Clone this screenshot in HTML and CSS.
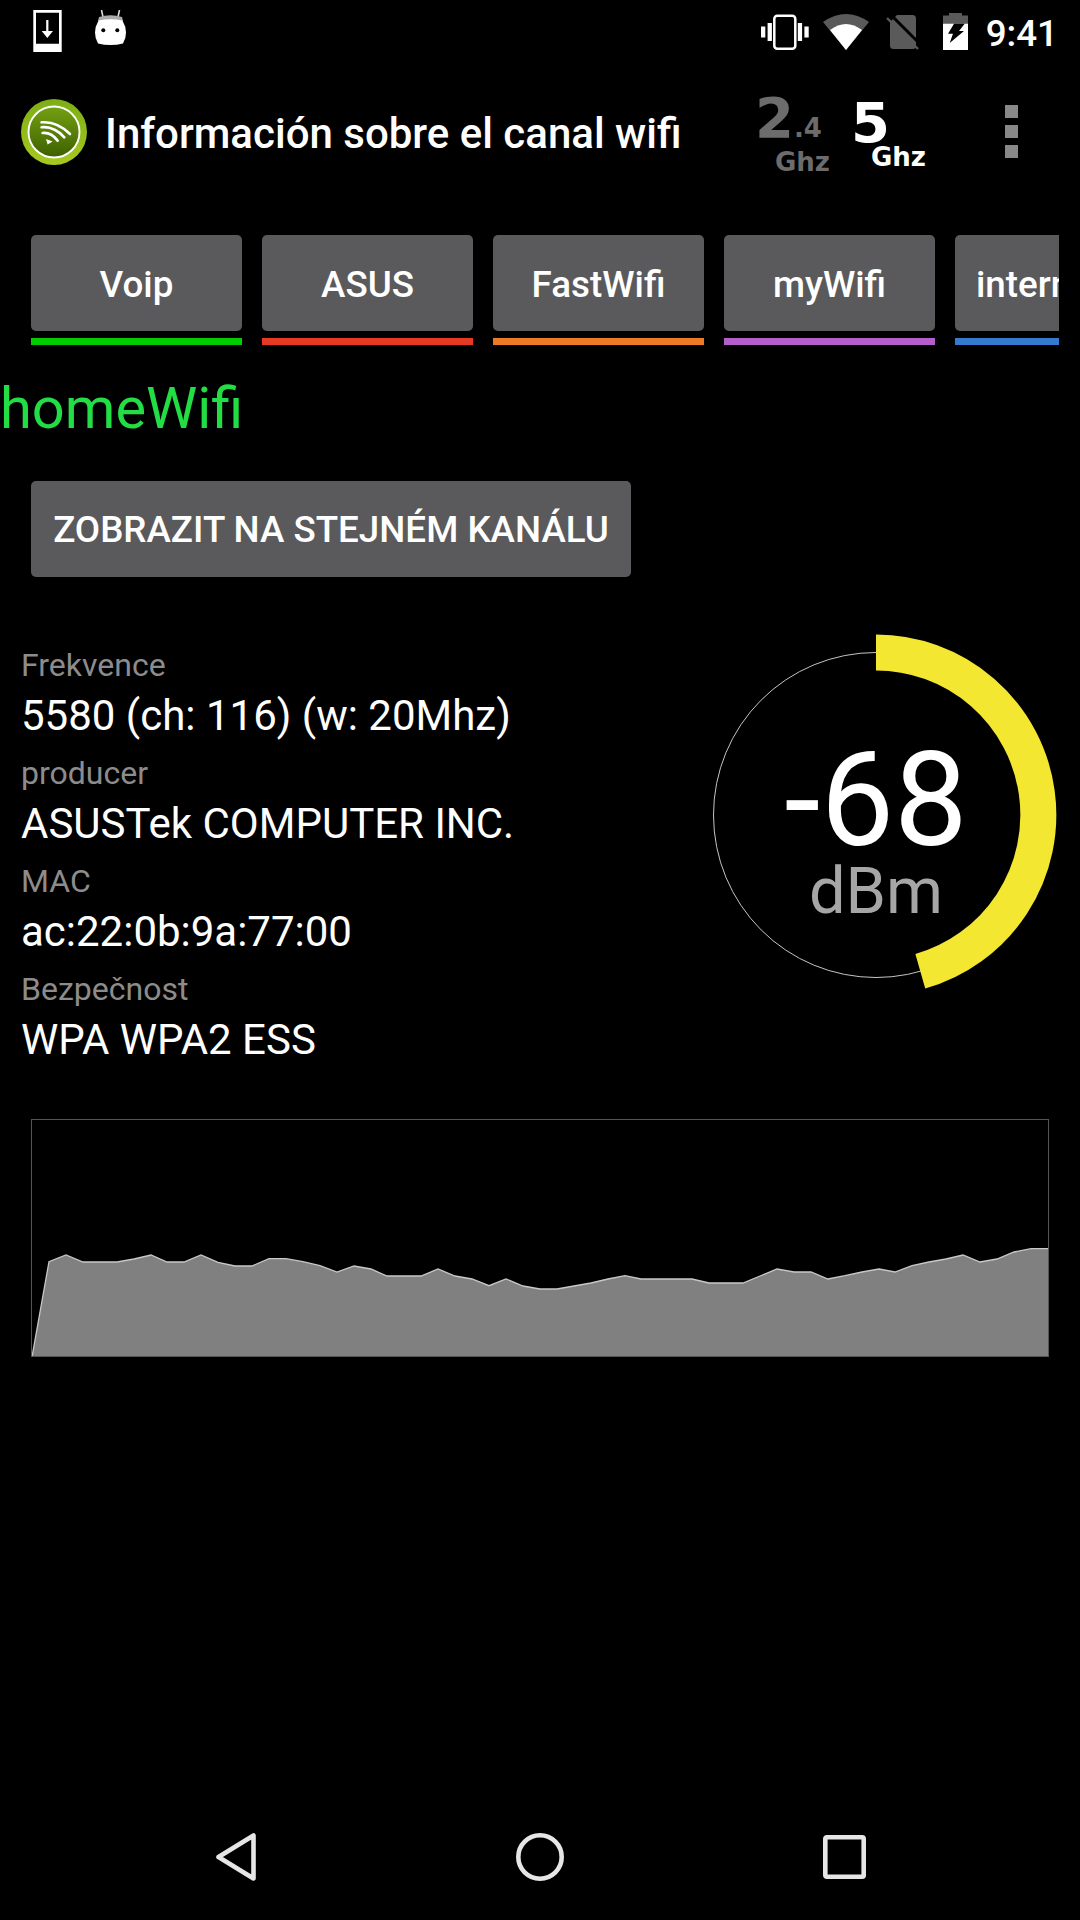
FILE: index.html
```html
<!DOCTYPE html>
<html lang="es">
<head>
	<meta charset="utf-8">
	<meta name="viewport" content="width=device-width, initial-scale=1.0">
	<title>Información sobre el canal wifi</title>
	<link rel="stylesheet" href="styles.css">
</head>
<body>
	<div class="screen">
		<div class="statusbar">
			<div class="status-left">
				<svg width="29" height="42" viewBox="0 0 29 42">
					<path fill="#fff" fill-rule="evenodd" d="M.3 0h28.400v42H.3zM3 2.800v31h23v-31z"/>
					<path fill="none" stroke="#fff" stroke-width="2.200" d="M14.300 10v12"/>
					<path fill="#fff" d="M8.700 21h11.300l-5.700 7z"/>
				</svg>
				<svg width="31" height="36" viewBox="0 0 31 36">
					<path fill="none" stroke="#ddd" stroke-width="1.600" d="M6.500 0l1.500 7M24.500 0l-1.500 7"/>
					<path fill="#aaa" d="M4 7q11.500-3.500 23 0l1 4H3z"/>
					<path fill="#fff" d="M3.500 10.500q12-2.500 24 0 3.500 6 3.500 12 0 6-3 11-12.500 3-25 0-3-5-3-11 0-6 3.500-12z"/>
					<circle cx="8.300" cy="20.300" r="2" fill="#000"/>
					<circle cx="22.300" cy="20.300" r="2" fill="#000"/>
				</svg>
			</div>
			<div class="status-right">
				<svg class="ic-vibrate" width="48" height="36" viewBox="0 0 48 36">
					<rect x="13.300" y="1.700" width="21" height="33" rx="3" fill="none" stroke="#fff" stroke-width="2.500"/>
					<path fill="#fff" d="M6.600 9h4.300v18H6.600zM0 12.500h4.300v11H0zM36.800 9h4.300v18h-4.300zM43.400 12.500h4.300v11h-4.300z"/>
				</svg>
				<svg class="ic-wifi" width="46" height="36" viewBox="0 0 46 36">
					<path fill="#5a5a5a" d="M0 8Q23-8 46 8L23 36z"/>
					<path fill="#fff" d="M7 16Q23 4 39 16L23 36z"/>
				</svg>
				<svg class="ic-nosim" width="33" height="36" viewBox="0 0 33 36">
					<rect x="4" y="1" width="26" height="34" rx="3.500" fill="#5a5a5a"/>
					<path stroke="#000" stroke-width="3" d="M2-2L36 32"/>
					<path fill="#000" d="M0 0h12L0 12z"/>
					<path stroke="#5a5a5a" stroke-width="2.400" d="M1 4l31 31"/>
				</svg>
				<svg class="ic-battery" width="25" height="37" viewBox="0 0 25 37">
					<path fill="#5a5a5a" d="M6 0h13v2.500h6V11H0V2.500h6z"/>
					<path fill="#fff" fill-rule="evenodd" d="M0 10.700h25V37H0zM11 10.700h10.700L16 18h5L6.700 30 10 20.700H5z"/>
				</svg>
				<span class="clock">9:41</span>
			</div>
		</div>

		<header class="appbar">
			<svg class="app-logo" width="66" height="66" viewBox="0 0 66 66">
				<defs>
					<linearGradient id="logoOuter" x1="0" y1="0" x2="0" y2="1">
						<stop offset="0" stop-color="#7cae14"/>
						<stop offset="1" stop-color="#a6c920"/>
					</linearGradient>
					<linearGradient id="logoInner" x1="0" y1="0" x2="0" y2="1">
						<stop offset="0" stop-color="#74a012"/>
						<stop offset="1" stop-color="#3d6000"/>
					</linearGradient>
				</defs>
				<circle cx="33" cy="33" r="33" fill="url(#logoOuter)"/>
				<circle cx="33" cy="33" r="25.500" fill="url(#logoInner)" stroke="#fff" stroke-width="1.900"/>
				<g fill="none" stroke="#fff" stroke-width="2.600" stroke-linecap="round">
					<path d="M20.600 23.300Q36 22 49 35"/>
					<path d="M20.600 28.300Q33 27 43.300 38.300"/>
					<path d="M21.600 34Q30 33 36.600 41.600"/>
				</g>
				<path fill="#fff" d="M25 40l6.600 2.600-5 3z"/>
			</svg>
			<h1 class="app-title">Información sobre el canal wifi</h1>
			<div class="band band-off">
				<span class="band-num">2<small>.4</small></span>
				<span class="band-unit">Ghz</span>
			</div>
			<div class="band band-on">
				<span class="band-num">5</span>
				<span class="band-unit">Ghz</span>
			</div>
			<div class="overflow"><i></i><i></i><i></i></div>
		</header>

		<nav class="tabs">
			<div class="tab tab-green"><span class="tab-btn">Voip</span></div>
			<div class="tab tab-red"><span class="tab-btn">ASUS</span></div>
			<div class="tab tab-orange"><span class="tab-btn">FastWifi</span></div>
			<div class="tab tab-purple"><span class="tab-btn">myWifi</span></div>
			<div class="tab tab-blue"><span class="tab-btn tab-btn-long">internet</span></div>
		</nav>

		<h2 class="ssid">homeWifi</h2>
		<button class="same-channel">ZOBRAZIT NA STEJNÉM KANÁLU</button>

		<section class="details">
			<dl class="info">
				<dt>Frekvence</dt>
				<dd>5580 (ch: 116) (w: 20Mhz)</dd>
				<dt>producer</dt>
				<dd>ASUSTek COMPUTER INC.</dd>
				<dt>MAC</dt>
				<dd>ac:22:0b:9a:77:00</dd>
				<dt>Bezpečnost</dt>
				<dd>WPA WPA2 ESS</dd>
			</dl>
			<div class="gauge">
				<svg width="346" height="358" viewBox="0 0 346 358">
					<circle cx="163" cy="181" r="162.500" fill="none" stroke="#c4c4c4" stroke-width="1"/>
					<path d="M163 18.500A162.500 162.500 0 0 1 207.300 337.300" fill="none" stroke="#f3e731" stroke-width="36"/>
				</svg>
				<div class="gauge-text">
					<span class="gauge-value">-68</span>
					<span class="gauge-unit">dBm</span>
				</div>
			</div>
		</section>

		<div class="chart">
			<svg width="1016" height="236" viewBox="0 0 1016 236">
				<polygon fill="#808080" points="0,237 17,141.700 34,135 51,142 68,142 85,142 102,139 119,135 135,142 152,142 169,135 186,142.300 203,146 220,146 237,138.700 254,138.700 271,141.700 288,145.700 305,152 322,146 339,149 355,156 372,156 389,156 406,149 423,156 440,159 457,165.700 474,159 491,166 508,169 525,169 542,166 559,163 576,159 593,155.700 609,159 626,159 643,159 660,159 677,163 694,163 711,163 728,156 745,149 762,152 779,152 796,159 813,155.700 830,152 847,149 863,152 880,145.700 897,142 914,139 931,135 948,142 965,139 982,132 999,128.700 1016,128.700 1016,237"/>
				<polyline fill="none" stroke="#c8c8c8" stroke-width="1.300" points="0,237 17,141.700 34,135 51,142 68,142 85,142 102,139 119,135 135,142 152,142 169,135 186,142.300 203,146 220,146 237,138.700 254,138.700 271,141.700 288,145.700 305,152 322,146 339,149 355,156 372,156 389,156 406,149 423,156 440,159 457,165.700 474,159 491,166 508,169 525,169 542,166 559,163 576,159 593,155.700 609,159 626,159 643,159 660,159 677,163 694,163 711,163 728,156 745,149 762,152 779,152 796,159 813,155.700 830,152 847,149 863,152 880,145.700 897,142 914,139 931,135 948,142 965,139 982,132 999,128.700 1016,128.700"/>
			</svg>
		</div>

		<footer class="navbar">
			<svg width="40" height="48" viewBox="0 0 40 48">
				<path d="M37.500 2.500v43L2.500 24z" fill="none" stroke="#e6e6e6" stroke-width="4.600" stroke-linejoin="round"/>
			</svg>
			<svg class="nav-home" width="48" height="48" viewBox="0 0 48 48">
				<circle cx="24" cy="24" r="21.700" fill="none" stroke="#e6e6e6" stroke-width="4.600"/>
			</svg>
			<svg width="43" height="44" viewBox="0 0 43 44">
				<rect x="2.300" y="2.300" width="38.400" height="39.400" rx="1.500" fill="none" stroke="#e6e6e6" stroke-width="4.600"/>
			</svg>
		</footer>
	</div>
</body>
</html>
```

FILE: styles.css
```css
* {
	box-sizing: border-box;
}
html, body {
	margin: 0;
	background: #000;
}
.screen {
	width: 1080px;
	height: 1920px;
	overflow: hidden;
	display: flex;
	flex-direction: column;
	color: #fff;
	font-family: Roboto, "Noto Sans", sans-serif;
}

/* status bar */
.statusbar {
	height: 63px;
	padding: 0 22px 0 33px;
	display: flex;
	justify-content: space-between;
}
.status-left {
	display: flex;
	align-items: flex-start;
	gap: 33px;
	padding-top: 10px;
}
.status-right {
	display: flex;
	align-items: center;
}
.ic-vibrate {
	margin-right: 14px;
}
.ic-wifi {
	margin-right: 17px;
}
.ic-nosim {
	margin-right: 24px;
}
.ic-battery {
	margin-right: 18px;
}
.clock {
	padding-top: 3px;
	font-size: 36.75px;
	font-weight: 500;
}

/* action bar */
.appbar {
	height: 136px;
	padding: 4px 0 0 21px;
	display: flex;
	align-items: center;
}
.app-logo {
	flex: none;
	margin-bottom: 3px;
}
.app-title {
	flex: none;
	margin: 0 0 0 18px;
	width: 651px;
	font-size: 42px;
	font-weight: 500;
	white-space: nowrap;
}
.band {
	flex: none;
	width: 96px;
	display: flex;
	flex-direction: column;
	font-family: "DejaVu Sans", sans-serif;
	font-weight: 700;
}
.band-off {
	color: #6c6c6c;
}
.band-on {
	color: #fff;
}
.band-num {
	margin-left: -1px;
	font-size: 56px;
	line-height: 48px;
}
.band-num small {
	font-size: 26px;
}
.band-unit {
	margin-left: 19px;
	font-size: 26px;
	line-height: 20px;
}
.overflow {
	margin: 0 0 4px 57px;
	display: flex;
	flex-direction: column;
	gap: 7px;
}
.overflow i {
	width: 13px;
	height: 13px;
	background: #888;
}

/* saved network tabs */
.tabs {
	margin: 36px 21px 0 31px;
	display: flex;
	gap: 20px;
	overflow: hidden;
}
.tab {
	flex: none;
	width: 211px;
	height: 110px;
	display: flex;
	flex-direction: column;
	justify-content: space-between;
	border-bottom: 7px solid;
}
.tab-btn {
	height: 96px;
	padding-top: 2px;
	display: flex;
	align-items: center;
	justify-content: center;
	background: #5a5a5c;
	border-radius: 5px;
	font-size: 36.75px;
	font-weight: 500;
	white-space: nowrap;
}
.tab-btn-long {
	justify-content: flex-start;
	padding-left: 21px;
}
.tab-green { border-color: #00cc00; }
.tab-red { border-color: #e83a23; }
.tab-orange { border-color: #ee7a27; }
.tab-purple { border-color: #b45ecb; }
.tab-blue { border-color: #347bd0; }

.ssid {
	margin: 25px 0 0 0;
	height: 76px;
	color: #22dd44;
	font-size: 57.75px;
	font-weight: 400;
	line-height: 76px;
}
.same-channel {
	margin: 35px 0 0 31px;
	width: 600px;
	height: 96px;
	flex: none;
	padding: 0;
	border: 0;
	border-radius: 5px;
	background: #5a5a5c;
	color: #fff;
	font: 500 36.75px Roboto, sans-serif;
}

/* signal details */
.details {
	margin-top: 57px;
	padding-left: 21px;
	display: flex;
	align-items: flex-start;
	justify-content: space-between;
}
.info {
	margin: 0;
	padding-top: 9px;
}
.info dt {
	height: 44px;
	color: #8c8c8c;
	font-size: 32px;
	line-height: 44px;
}
.info dd {
	margin: 0;
	height: 64px;
	font-size: 42px;
	line-height: 58px;
}
.gauge {
	position: relative;
	width: 346px;
	margin-right: 21px;
}
.gauge svg {
	display: block;
}
.gauge-text {
	position: absolute;
	left: 0;
	top: 0;
	width: 326px;
	padding-top: 111px;
	display: flex;
	flex-direction: column;
	align-items: center;
}
.gauge-value {
	font-size: 131px;
	line-height: 110px;
}
.gauge-unit {
	margin-top: 6px;
	color: #a6a6a6;
	font-size: 65px;
	line-height: 60px;
}

/* signal history */
.chart {
	margin: 44px 0 0 31px;
	width: 1018px;
	height: 238px;
	flex: none;
	border: 1px solid #555;
}
.chart svg {
	display: block;
}

.navbar {
	margin-top: auto;
	height: 126px;
	padding-left: 216px;
	display: flex;
	align-items: center;
	gap: 259px;
}
.nav-home {
	margin-left: 1px;
}
```
